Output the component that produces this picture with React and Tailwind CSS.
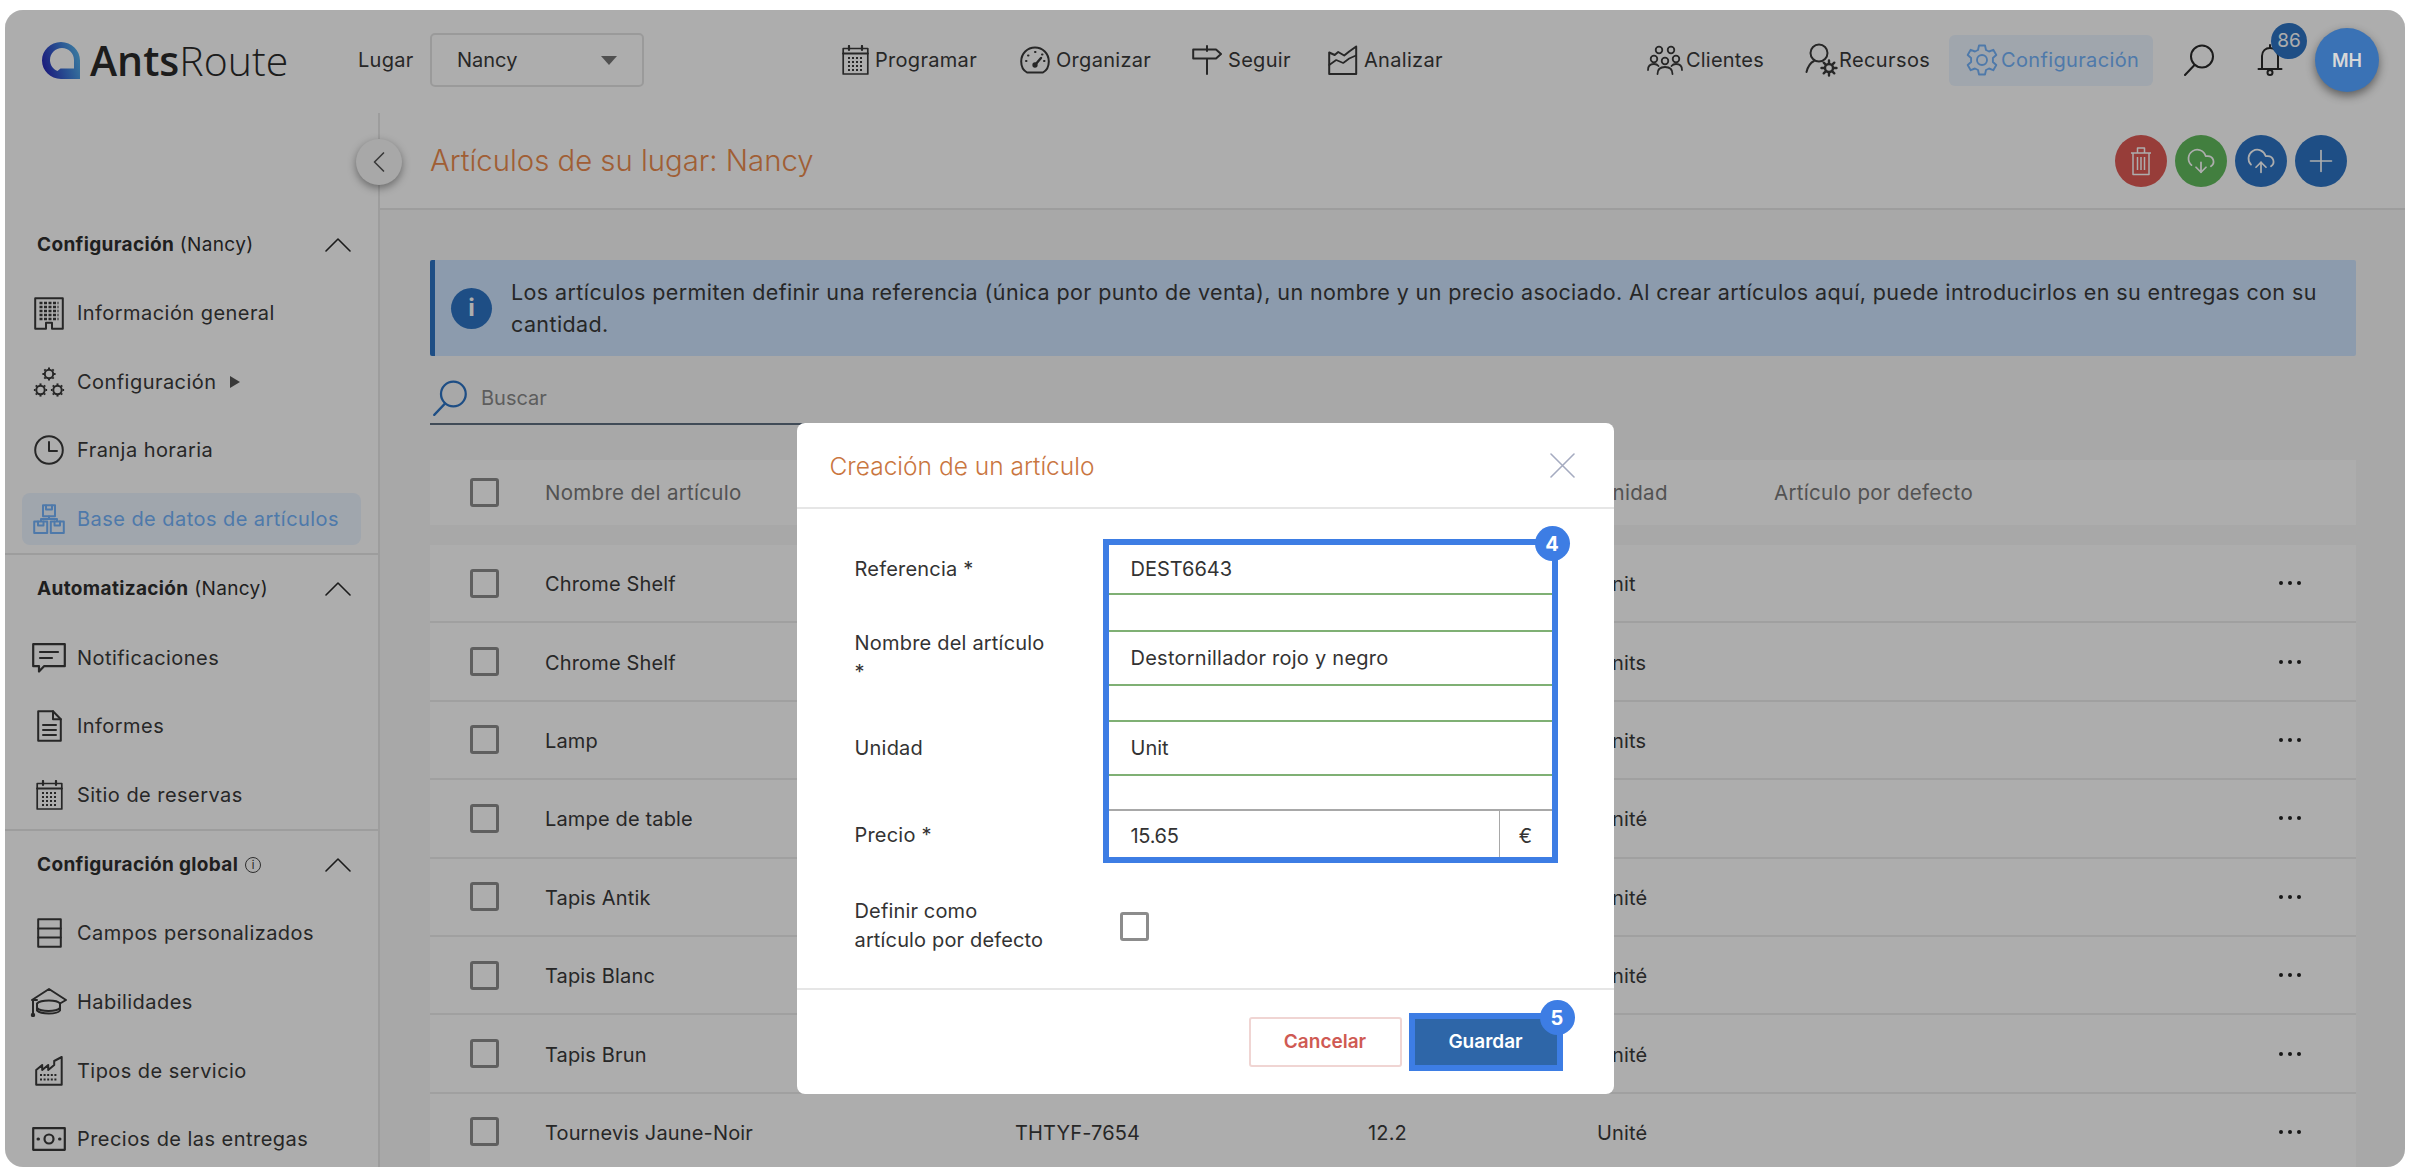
import { ChevronLeft, CloudDownload, CloudUpload, Plus } from 'lucide-react';

const s = { fill: 'none', stroke: 'currentColor', strokeWidth: 1.7, strokeLinecap: 'round', strokeLinejoin: 'round' };

function CalendarIcon({ className }) {
  return (
    <svg viewBox="0 0 27 30" className={className} {...s}>
      <rect x="1.2" y="3.5" width="24.6" height="25.5" />
      <path d="M1.2 8.5h24.6M7 1v4M20 1v4" strokeWidth="2.2" />
      <path d="M6 13h15M6 17h15M6 21h15M6 25h15" strokeWidth="2" strokeDasharray="2 2" strokeLinecap="butt" />
    </svg>
  );
}

function GaugeIcon({ className }) {
  return (
    <svg viewBox="0 0 30 30" className={className} {...s}>
      <path d="M7 27.5C3.5 25.5 1.2 21 1.2 16.5 1.2 8.5 7.3 2.5 15 2.5s13.8 6 13.8 14c0 4.5-2.3 9-5.8 11z" strokeWidth="2" />
      <path d="M15 20l6-7" strokeWidth="2.4" />
      <circle cx="15" cy="20" r="1.8" fill="currentColor" />
      <path d="M6 16h.5M8 10.5h.5M15 7h.5M22 9.5h.5M24 16h.5" strokeWidth="2" />
    </svg>
  );
}

function SignIcon({ className }) {
  return (
    <svg viewBox="0 0 30 30" className={className} {...s}>
      <path d="M15 1v5M15 14v15" strokeWidth="2" />
      <path d="M1.2 4.5H24l5 4.5-5 4.5H1.2z" strokeWidth="2" />
    </svg>
  );
}

function AnalyticsIcon({ className }) {
  return (
    <svg viewBox="0 0 30 30" className={className} {...s}>
      <path d="M1.2 7.5V29h27V1.5l-7 5-5 4-6-3.5-3.5 3z" strokeWidth="2" />
      <path d="M1.2 20l7-5 7 3 6-4.5 6.8-3" strokeWidth="1.7" />
    </svg>
  );
}

function ClientsIcon({ className }) {
  return (
    <svg viewBox="0 0 36 30" className={className} {...s} strokeWidth="1.8">
      <circle cx="12" cy="5" r="3.3" />
      <circle cx="24" cy="5" r="3.3" />
      <circle cx="7" cy="14" r="3.3" />
      <circle cx="29" cy="14" r="3.3" />
      <circle cx="18" cy="16" r="3.3" />
      <path d="M1 25c0-4 2.5-6 6-6 2 0 3.5.7 4.5 2M35 25c0-4-2.5-6-6-6-2 0-3.5.7-4.5 2M10.5 29c0-4.5 3-7 7.5-7s7.5 2.5 7.5 7" />
    </svg>
  );
}

function ResourcesIcon({ className }) {
  return (
    <svg viewBox="0 0 34 34" className={className} {...s}>
      <circle cx="14" cy="10" r="8.5" strokeWidth="2" />
      <path d="M9 18C5 20 2.5 25 1.5 29" strokeWidth="2" />
      <circle cx="24" cy="25" r="4" strokeWidth="2.4" />
      <path d="M24 17.5v3M24 29.5v3M16.5 25h3M28.5 25h3M18.7 19.7l2 2M27.3 28.3l2 2M29.3 19.7l-2 2M20.7 28.3l-2 2" strokeWidth="2.4" />
    </svg>
  );
}

function GearIcon({ className }) {
  return (
    <svg viewBox="0 0 32 32" className={className} {...s} strokeWidth="1.9">
      <path d="M13 1.5h6l1 4.5 3 1.5 4.3-1.7 3 5.2-3.4 3v4l3.4 3-3 5.2-4.3-1.7-3 1.5-1 4.5h-6l-1-4.5-3-1.5-4.3 1.7-3-5.2 3.4-3v-4l-3.4-3 3-5.2L9 7.5l3-1.500z" />
      <circle cx="16" cy="16" r="5" />
    </svg>
  );
}

function SearchIcon({ className }) {
  return (
    <svg viewBox="0 0 32 32" className={className} {...s} strokeWidth="2">
      <circle cx="19" cy="12.5" r="11" />
      <path d="M11.5 21L2 31" />
    </svg>
  );
}

function BellIcon({ className }) {
  return (
    <svg viewBox="0 0 26 32" className={className} {...s} strokeWidth="2">
      <path d="M13 1v3M5 24V12c0-5 3.5-8 8-8s8 3 8 8v12M1.5 25h23" />
      <circle cx="13" cy="28.5" r="2.5" />
    </svg>
  );
}

function BuildingIcon({ className }) {
  return (
    <svg viewBox="0 0 30 33" className={className} {...s} strokeWidth="2">
      <path d="M1.2 1.2h27.6v30.6H18v-6h-6v6H1.2z" />
      <path d="M5.5 6h19M5.5 10h19M5.5 14h19M5.5 18h19M5.5 22h19" strokeWidth="2.4" strokeDasharray="3 1.5" strokeLinecap="butt" />
    </svg>
  );
}

// small cog drawn from a ring and eight teeth
function Cog({ cx, cy }) {
  const teeth = [0, 45, 90, 135, 180, 225, 270, 315];
  return (
    <g>
      <circle cx={cx} cy={cy} r="4.2" strokeWidth="2" />
      {teeth.map((a) => (
        <line
          key={a}
          x1={cx + 5 * Math.cos((a * Math.PI) / 180)}
          y1={cy + 5 * Math.sin((a * Math.PI) / 180)}
          x2={cx + 6.6 * Math.cos((a * Math.PI) / 180)}
          y2={cy + 6.6 * Math.sin((a * Math.PI) / 180)}
          strokeWidth="2"
          strokeLinecap="butt"
        />
      ))}
    </g>
  );
}

function NodesIcon({ className }) {
  return (
    <svg viewBox="0 0 32 32" className={className} {...s}>
      <Cog cx={16} cy={8} />
      <Cog cx={7.5} cy={24} />
      <Cog cx={24.5} cy={24} />
    </svg>
  );
}

function ClockIcon({ className }) {
  return (
    <svg viewBox="0 0 30 30" className={className} {...s} strokeWidth="2">
      <circle cx="15" cy="15" r="13.8" />
      <path d="M15 7v9h8" />
    </svg>
  );
}

function BoxesIcon({ className }) {
  return (
    <svg viewBox="0 0 32 30" className={className} {...s} strokeWidth="2">
      <rect x="10" y="1.2" width="12" height="11" />
      <rect x="1.2" y="17.5" width="13" height="11.5" />
      <rect x="17.8" y="17.5" width="13" height="11.5" />
      <path d="M16 12.5V15M8 17v-2h16v2M13 1.5v4h6v-4M5 17.5v4h5.5v-4M21.5 17.5v4H27v-4" />
    </svg>
  );
}

function MessageIcon({ className }) {
  return (
    <svg viewBox="0 0 34 30" className={className} {...s} strokeWidth="2.2">
      <path d="M1.2 1.2h31.6v22H12L7 28.5v-5.3H1.2z" />
      <path d="M8 9h18M8 15h12" />
    </svg>
  );
}

function DocIcon({ className }) {
  return (
    <svg viewBox="0 0 25 32" className={className} {...s} strokeWidth="2">
      <path d="M1.2 1.2H16l7.8 8v21.6H1.2z" />
      <path d="M16 1.2v8h7.8M6 15h13M6 20h13M6 25h13" />
    </svg>
  );
}

function RowsIcon({ className }) {
  return (
    <svg viewBox="0 0 25 30" className={className} {...s} strokeWidth="2">
      <rect x="1.2" y="1.2" width="22.6" height="27.6" />
      <path d="M1.2 10.5h22.6M1.2 19.5h22.6" />
    </svg>
  );
}

function GraduationIcon({ className }) {
  return (
    <svg viewBox="0 0 38 30" className={className} {...s} strokeWidth="2">
      <path d="M2 13L19 2l17 11-6 3.5M2 13h5M7 16.5c4-4 20-4 23 0v7c-3 4-19 4-23 0z" />
      <path d="M7 21c4 4 19 4 23 0M3 13v15" />
      <circle cx="3" cy="28" r="1.2" fill="currentColor" />
    </svg>
  );
}

function FactoryIcon({ className }) {
  return (
    <svg viewBox="0 0 28 30" className={className} {...s} strokeWidth="2">
      <path d="M1.2 28.8V14l6-5v5l6-5v5l6-5V5l7.5-4v27.800z" />
      <path d="M5 19h18M5 23.500h18" strokeWidth="2.2" strokeDasharray="2 1.6" strokeLinecap="butt" />
    </svg>
  );
}

function MoneyIcon({ className }) {
  return (
    <svg viewBox="0 0 34 24" className={className} {...s} strokeWidth="2.2">
      <rect x="1.2" y="1.2" width="31.6" height="21.6" />
      <circle cx="17" cy="12" r="4.5" />
      <path d="M6 12h.5M27.5 12h.5" strokeWidth="3" />
    </svg>
  );
}

function TrashIcon({ className }) {
  return (
    <svg viewBox="0 0 22 30" className={className} {...s} strokeWidth="1.5" strokeLinecap="butt">
      <path d="M3 7v21.5h16V7M1 7h20M7.500 6.500V2h7v4.500M7.500 11v13M11 11v13M14.500 11v13" />
    </svg>
  );
}

function Chevron({ className }) {
  return (
    <svg viewBox="0 0 26 14" className={className} {...s} strokeWidth="1.6">
      <path d="M1 13L13 1l12 12" />
    </svg>
  );
}

function Checkbox({ className = '' }) {
  return <span className={`block size-[29px] rounded-[3px] border-[3px] border-[#8c8c8c] bg-white ${className}`} />;
}

const navLeft = [
  { label: 'Programar', Icon: CalendarIcon, cls: 'w-[178px]', icon: 'h-[30px] w-[27px]' },
  { label: 'Organizar', Icon: GaugeIcon, cls: 'w-[172px]', icon: 'size-[30px]' },
  { label: 'Seguir', Icon: SignIcon, cls: 'w-[136px]', icon: 'size-[30px]' },
  { label: 'Analizar', Icon: AnalyticsIcon, cls: 'w-[319px]', icon: 'size-[30px]' },
];

const sideSections = [
  {
    title: 'Configuración',
    suffix: ' (Nancy)',
    items: [
      { label: 'Información general', Icon: BuildingIcon, icon: 'h-[33px] w-[30px]' },
      { label: 'Configuración', Icon: NodesIcon, icon: 'size-[32px]', arrow: true },
      { label: 'Franja horaria', Icon: ClockIcon, icon: 'size-[30px]' },
      { label: 'Base de datos de artículos', Icon: BoxesIcon, icon: 'h-[30px] w-[32px]', active: true },
    ],
  },
  {
    title: 'Automatización',
    suffix: ' (Nancy)',
    items: [
      { label: 'Notificaciones', Icon: MessageIcon, icon: 'h-[30px] w-[34px]' },
      { label: 'Informes', Icon: DocIcon, icon: 'h-[32px] w-[25px]' },
      { label: 'Sitio de reservas', Icon: CalendarIcon, icon: 'h-[30px] w-[27px]' },
    ],
  },
  {
    title: 'Configuración global',
    info: true,
    items: [
      { label: 'Campos personalizados', Icon: RowsIcon, icon: 'h-[30px] w-[25px]' },
      { label: 'Habilidades', Icon: GraduationIcon, icon: 'h-[30px] w-[38px]' },
      { label: 'Tipos de servicio', Icon: FactoryIcon, icon: 'h-[30px] w-[28px]' },
      { label: 'Precios de las entregas', Icon: MoneyIcon, icon: 'h-[24px] w-[34px]' },
    ],
  },
];

const rows = [
  { name: 'Chrome Shelf', unit: 'Unit' },
  { name: 'Chrome Shelf', unit: 'Units' },
  { name: 'Lamp', unit: 'Units' },
  { name: 'Lampe de table', unit: 'Unité' },
  { name: 'Tapis Antik', unit: 'Unité' },
  { name: 'Tapis Blanc', unit: 'Unité' },
  { name: 'Tapis Brun', unit: 'Unité' },
  { name: 'Tournevis Jaune-Noir', ref: 'THTYF-7654', price: '12.2', unit: 'Unité' },
];

const tableCols = 'grid grid-cols-[115px_470px_353px_229px_177px_505px_1fr] items-center';

function Header() {
  return (
    <header className="flex h-[103px] shrink-0 items-center bg-white pb-[3px] shadow-[0_2px_4px_rgba(0,0,0,0.45)]">
      <div className="flex w-[837px] shrink-0 items-center pl-[37px]">
        <svg viewBox="0 0 38 37" className="h-[37px] w-[38px] shrink-0">
          <defs>
            <linearGradient id="logo" x1="0" y1="0.6" x2="1" y2="0.3">
              <stop offset="0" stopColor="#2a2ab8" />
              <stop offset="0.55" stopColor="#3d79d8" />
              <stop offset="1" stopColor="#58b6ec" />
            </linearGradient>
          </defs>
          <path fillRule="evenodd" fill="url(#logo)" d="M19 0c10.5 0 19 8.3 19 18.5V37H19C8.500 37 0 28.700 0 18.500S8.500 0 19 0zm1 6c-6.600 0-12 5.400-12 12 0 5 3 9 7.500 11l3-2.500H32V18c0-6.600-5.400-12-12-12z" />
        </svg>
        <div className="ml-[10px] w-[268px] font-['Open_Sans',sans-serif] text-[41px] leading-none text-[#2a2a2a]">
          <span className="font-semibold">Ants</span>
          <span className="font-light">Route</span>
        </div>
        <span className="w-[72px] text-[20px] tracking-[0.3px] text-[#3a3a3a]">Lugar</span>
        <div className="flex h-[54px] w-[214px] items-center justify-between rounded-[5px] border-2 border-[#e4e4e4] pl-[25px] pr-[25px] text-[20px] text-[#3a3a3a]">
          Nancy
          <span className="h-0 w-0 border-x-[8px] border-t-[9px] border-x-transparent border-t-[#777]" />
        </div>
      </div>
      {navLeft.map(({ label, Icon, cls, icon }) => (
        <div key={label} className={`flex shrink-0 items-center gap-[6px] text-[20px] tracking-[0.3px] text-[#3a3a3a] ${cls}`}>
          <Icon className={`shrink-0 ${icon}`} />
          {label}
        </div>
      ))}
      <div className="flex w-[158px] shrink-0 items-center gap-[3px] text-[20px] tracking-[0.2px] text-[#3a3a3a]">
        <ClientsIcon className="h-[30px] w-[36px] shrink-0" />
        Clientes
      </div>
      <div className="flex w-[144px] shrink-0 items-center text-[20px] tracking-[0.4px] text-[#3a3a3a]">
        <ResourcesIcon className="size-[34px] shrink-0" />
        Recursos
      </div>
      <div className="flex h-[51px] w-[204px] shrink-0 items-center gap-[3px] rounded-md bg-[#ecf5ff] pl-[17px] text-[20px] tracking-[0.35px] text-[#74b3fb]">
        <GearIcon className="size-[32px] shrink-0" />
        Configuración
      </div>
      <SearchIcon className="ml-[30px] size-[32px] shrink-0 text-[#2a2a2a]" />
      <div className="relative ml-[42px] shrink-0 text-[#2a2a2a]">
        <BellIcon className="h-[32px] w-[26px]" />
        <span className="absolute -top-[21px] left-[14px] flex size-[36px] items-center justify-center rounded-full bg-[#2d74c4] text-[19px] text-white">86</span>
      </div>
      <div className="relative z-20 ml-[32px] flex size-[64px] shrink-0 items-center justify-center rounded-full bg-[#3a72b5] text-[18px] font-semibold text-[#d8d8d8] shadow-[0_4px_10px_rgba(0,0,0,0.45)]">MH</div>
    </header>
  );
}

function Sidebar() {
  return (
    <aside className="w-[375px] shrink-0 border-r-2 border-[#e8e8e8] bg-white pt-[98px]">
      {sideSections.map((section) => (
        <section key={section.title} className="border-b-2 border-[#e8e8e8] last:border-b-0">
          <div className="flex h-[68px] items-center justify-between pl-[32px] pr-[27px] text-[19px] tracking-[0.35px] text-[#2f2f2f]">
            <span className="flex items-center gap-[7px]">
              <span>
                <b className="font-bold">{section.title}</b>
                {section.suffix}
              </span>
              {section.info && (
                <span className="flex size-[16px] items-center justify-center rounded-full border border-[#444] text-[11px] leading-none">i</span>
              )}
            </span>
            <Chevron className="h-[14px] w-[26px] text-[#2a2a2a]" />
          </div>
          {section.items.map(({ label, Icon, icon, active, arrow }) => (
            <div key={label} className="flex h-[68.6px] items-center px-[17px]">
              <div className={`flex h-[52px] w-full items-center gap-[8px] rounded-lg pl-[7px] text-[20px] tracking-[0.45px] ${active ? 'bg-[#ecf5ff] text-[#74b3fb]' : 'text-[#3a3a3a]'}`}>
                <span className="flex w-[40px] shrink-0 justify-center"><Icon className={icon} /></span>
                {label}
                {arrow && <span className="ml-[6px] h-0 w-0 border-y-[6px] border-l-[10px] border-y-transparent border-l-[#555]" />}
              </div>
            </div>
          ))}
        </section>
      ))}
    </aside>
  );
}

function Content() {
  return (
    <main className="relative min-w-0 flex-1 bg-[#f8f8f8]">
      <button className="absolute -left-[24px] top-[26px] flex size-[46px] items-center justify-center rounded-full bg-[#f8f8f8] shadow-[0_3px_8px_rgba(0,0,0,0.4)]">
        <ChevronLeft className="size-[36px] text-[#555]" strokeWidth={1.1} />
      </button>
      <div className="flex h-[97px] items-center justify-between border-b-2 border-[#e8e8e8] bg-white pl-[50px] pr-[58px]">
        <h1 className="text-[29.3px] font-light text-[#ec8b4d]">Artículos de su lugar: Nancy</h1>
        <div className="flex gap-[8px] text-white">
          <span className="flex size-[52px] items-center justify-center rounded-full bg-[#df5a55]"><TrashIcon className="h-[30px] w-[22px]" /></span>
          <span className="flex size-[52px] items-center justify-center rounded-full bg-[#62bb5e]"><CloudDownload className="size-[30px]" strokeWidth={1.4} /></span>
          <span className="flex size-[52px] items-center justify-center rounded-full bg-[#2d74c4]"><CloudUpload className="size-[30px]" strokeWidth={1.4} /></span>
          <span className="flex size-[52px] items-center justify-center rounded-full bg-[#2d74c4]"><Plus className="size-[36px]" strokeWidth={1.1} /></span>
        </div>
      </div>

      <div className="pl-[50px] pr-[49px] pt-[50px]">
        <div className="flex h-[96px] items-center rounded-[2px] border-l-[5px] border-[#2d74c4] bg-[#cfe5ff] pl-[16px]">
          <span className="flex size-[41px] shrink-0 items-center justify-center rounded-full bg-[#2d74c4] text-[24px] font-bold text-white">i</span>
          <p className="ml-[19px] whitespace-nowrap text-[21.5px] leading-[32px] tracking-[0.4px] text-[#3a3a3a]">
            Los artículos permiten definir una referencia (única por punto de venta), un nombre y un precio asociado. Al crear artículos aquí, puede introducirlos en su entregas con su
            <br />
            cantidad.
          </p>
        </div>

        <div className="mt-[14px] flex h-[55px] w-[500px] items-center gap-[13px] border-b-2 border-[#5f6f80] pl-[2px] pt-[3px]">
          <SearchIcon className="size-[36px] text-[#2d74c4]" />
          <span className="text-[20px] text-[#8a8a8a]">Buscar</span>
        </div>

        <div className={`mt-[35px] h-[65px] bg-white text-[20.5px] tracking-[0.3px] text-[#7a7a7a] ${tableCols}`}>
          <span className="pl-[40px]"><Checkbox /></span>
          <span className="pt-[2px]">Nombre del artículo</span>
          <span />
          <span />
          <span className="pt-[2px]">Unidad</span>
          <span className="pt-[2px]">Artículo por defecto</span>
          <span />
        </div>

        <div className="mt-[20px]">
          {rows.map((row, i) => (
            <div key={i} className={`h-[78.4px] border-b-2 border-[#ececec] bg-white text-[20px] tracking-[0.15px] text-[#3a3a3a] ${tableCols}`}>
              <span className="pl-[40px]"><Checkbox /></span>
              <span className="pt-[2px]">{row.name}</span>
              <span className="pt-[2px]">{row.ref}</span>
              <span className="pt-[2px]">{row.price}</span>
              <span className="pt-[2px]">{row.unit}</span>
              <span />
              <span className="flex gap-[5px]">
                <i className="size-[4px] rounded-full bg-[#222]" />
                <i className="size-[4px] rounded-full bg-[#222]" />
                <i className="size-[4px] rounded-full bg-[#222]" />
              </span>
            </div>
          ))}
        </div>
      </div>
    </main>
  );
}

function FormRow({ label, labelClass = '', children, rowClass }) {
  return (
    <div className={`flex items-center ${rowClass}`}>
      <label className={`w-[254px] shrink-0 text-[20px] leading-[29px] tracking-[0.2px] text-[#333] ${labelClass}`}>{label}</label>
      {children}
    </div>
  );
}

function Modal() {
  return (
    <div className="absolute inset-0 z-10 flex justify-center bg-black/[0.32] pt-[413px]">
      <div className="relative h-[671px] w-[817px] rounded-lg bg-white">
        <div className="flex h-[86px] items-center justify-between border-b-2 border-[#e6e6e6] pl-[33px] pr-[39px]">
          <h2 className="pt-[2px] text-[24.5px] font-light text-[#c9763f]">Creación de un artículo</h2>
          <svg viewBox="0 0 25 25" className="size-[25px] text-[#a5abc0]" {...s} strokeWidth="1.6">
            <path d="M1 1l23 23M24 1L1 24" />
          </svg>
        </div>

        <div className="pl-[58px] pt-[36px]">
          <FormRow label="Referencia *" labelClass="pb-[2px]" rowClass="h-[50px]">
            <div className="flex h-[50px] w-[443px] items-center border-b-2 border-[#7fb074] pl-[22px] text-[20px] text-[#333]">DEST6643</div>
          </FormRow>
          <FormRow label={<>Nombre del artículo<br />*</>} rowClass="mt-[36px] h-[54px]">
            <div className="flex h-[56px] w-[443px] items-center border-y-2 border-[#7fb074] pl-[22px] text-[20px] tracking-[0.25px] text-[#333]">Destornillador rojo y negro</div>
          </FormRow>
          <FormRow label="Unidad" rowClass="mt-[36px] h-[54px]">
            <div className="flex h-[56px] w-[443px] items-center border-y-2 border-[#7fb074] pl-[22px] text-[20px] text-[#333]">Unit</div>
          </FormRow>
          <FormRow label="Precio *" labelClass="pt-[4px]" rowClass="mt-[34px] h-[49px]">
            <div className="flex h-[50px] w-[443px] border-t-2 border-[#a8a8a8] text-[20px] text-[#333]">
              <span className="flex flex-1 items-center pl-[22px] pt-[3px] tracking-[-0.3px]">15.65</span>
              <span className="flex w-[53px] items-center justify-center border-l border-[#a8a8a8] pt-[3px]">€</span>
            </div>
          </FormRow>
          <div className="mt-[39px] flex items-center">
            <label className="w-[265px] shrink-0 text-[20px] leading-[29px] tracking-[0.15px] text-[#333]">Definir como<br />artículo por defecto</label>
            <Checkbox />
          </div>
        </div>

        <div className="absolute inset-x-0 top-[565px] flex h-[106px] justify-end gap-[7px] border-t-2 border-[#e6e6e6] pr-[212px] pt-[27px]">
          <button className="h-[50px] w-[153px] rounded-[3px] border-2 border-[#f0d5d3] text-[19px] font-semibold text-[#cf5a53]">Cancelar</button>
        </div>
        <div className="absolute left-[612px] top-[590px] h-[58px] w-[154px] border-[6px] border-[#3d7de4] bg-[#2e66a8]">
          <button className="flex h-full w-full items-center justify-center text-[19px] font-semibold text-white">Guardar</button>
        </div>

        <div className="pointer-events-none absolute left-[306px] top-[116px] h-[324px] w-[455px] border-[6px] border-[#3d7de4]" />
        <span className="absolute left-[738px] top-[103px] flex size-[35px] items-center justify-center rounded-full bg-[#3d7de4] text-[20px] font-bold text-white">4</span>
        <span className="absolute left-[743px] top-[577px] flex size-[35px] items-center justify-center rounded-full bg-[#3d7de4] text-[20px] font-bold text-white">5</span>
      </div>
    </div>
  );
}

export default function App() {
  return (
    <div className="h-[1175px] w-[2410px] overflow-hidden bg-white px-[5px] pt-[10px] font-['Inter',sans-serif]">
      <div className="relative flex h-[1157px] flex-col overflow-hidden rounded-[18px]">
        <Header />
        <div className="flex min-h-0 flex-1">
          <Sidebar />
          <Content />
        </div>
        <Modal />
      </div>
    </div>
  );
}
